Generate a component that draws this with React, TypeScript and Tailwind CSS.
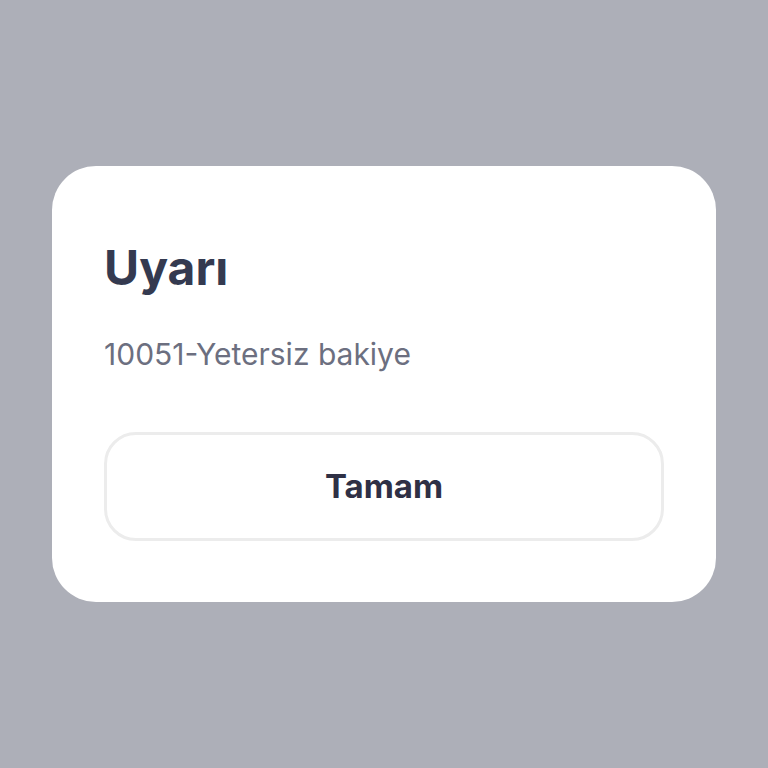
export default function App() {
  return (
    <div className="w-[768px] h-[768px] bg-[#adafb8] flex items-center justify-center" style={{ fontFamily: 'Inter, "Noto Sans", sans-serif' }}>
      <div className="w-[664px] h-[436px] bg-white rounded-[44px] px-[52px] pt-[70px] flex flex-col">
        <h1 className="text-[48px] leading-[64px] font-bold text-[#343a50]">Uyarı</h1>
        <p className="mt-[34px] text-[30px] leading-[40px] text-[#6c6f80]">10051-Yetersiz bakiye</p>
        <button className="mt-[58px] h-[109px] w-full rounded-[32px] border-[3px] border-[#ececec] text-[33px] font-bold text-[#2f3045]">
          Tamam
        </button>
      </div>
    </div>
  )
}
